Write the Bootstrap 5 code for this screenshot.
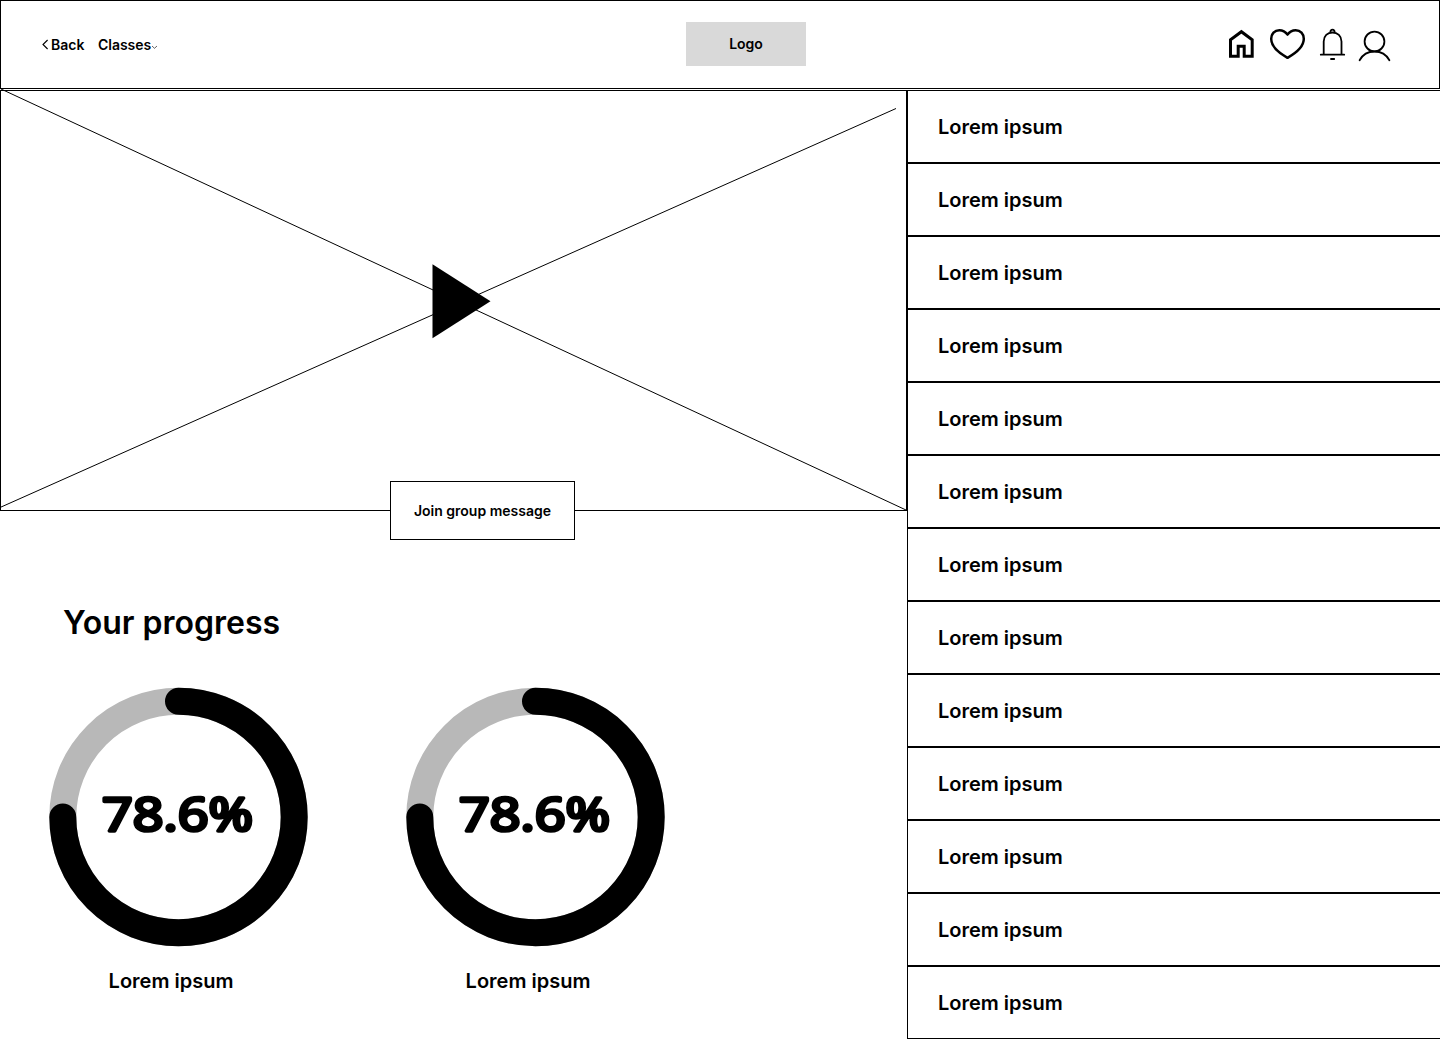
<!DOCTYPE html>
<html lang="en">
<head>
<meta charset="utf-8">
<meta name="viewport" content="width=device-width, initial-scale=1">
<title>Class</title>
<link href="https://cdn.jsdelivr.net/npm/bootstrap@5.3.0/dist/css/bootstrap.min.css" rel="stylesheet">
<style>
  body { font-family: Inter, "Liberation Sans", sans-serif; font-weight: 600; font-size: 14px; line-height: 17px; color: #000; background: #fff; overflow: hidden; }
  svg { display: block; flex: none; overflow: visible; }
  .topbar { height: 89px; border: 1px solid #000; padding: 0 48px 0 41px; margin-bottom: 1px; }
  .back-nav { width: 644px; gap: 13.500px; }
  .topbar a { color: #000; text-decoration: none; }
  .brand-box { width: 120px; height: 44px; background: #d9d9d9; margin-bottom: 1px; padding-bottom: 1px; }
  .main-col { width: 907px; flex: none; }
  .video-box { height: 421px; border: 1px solid #000; position: relative; }
  .video-box svg { margin: -1px; }
  .join-btn { position: absolute; left: 389px; bottom: -30px; width: 185px; height: 59px; color: #000; background: #fff; border: 1px solid #000; border-radius: 0; font-size: 14px; font-weight: 600; line-height: 17px; padding: 0; }
  .progress-area { padding: 92px 49px 0 49px; }
  .progress-area h2 { font-size: 32px; line-height: 40px; font-weight: 600; margin: 0 0 44px 14px; }
  .rings { gap: 98px; }
  .ring-item { width: 259px; }
  .ring-caption, .lesson { font-size: 20px; line-height: 24px; }
  .ring-caption { margin: 22px 15px 0 0; }
  .pct { font-family: "Open Sans", "Noto Sans", sans-serif; font-weight: 400; font-size: 46px; }
  .lesson { height: 73px; border: solid #000; border-width: 1px 0 1px 1px; padding: 0 30px; }
</style>
</head>
<body>
<header class="topbar d-flex align-items-center">
  <nav class="back-nav d-flex align-items-center">
    <a href="#" class="d-flex align-items-center">
      <svg width="9" height="12" viewBox="0 0 9 12" fill="none" stroke="#000" stroke-width="1.1"><path d="M5.600 1 1 5.500l4.600 4.500"/></svg>
      <span>Back</span>
    </a>
    <a href="#" class="d-flex align-items-center">
      <span>Classes</span>
      <svg width="6" height="6" viewBox="0 0 6 6" fill="none" stroke="#222" stroke-width=".7"><path d="M1 4 3.500 6.300 6 4"/></svg>
    </a>
  </nav>
  <div class="brand-box d-flex align-items-center justify-content-center">Logo</div>
  <div class="ms-auto">
    <svg width="165" height="36" viewBox="1226 27 165 36" fill="none" stroke="#000" role="img" aria-label="Home, favourites, notifications, profile">
      <path stroke-width="3" d="M1230.500 56.200V39.700L1241.400 31.700 1252.200 39.700V56.200H1244.200V46.300H1238.200V56.200Z"/>
      <path stroke-width="2.500" stroke-linejoin="round" d="M1287.500 34.600C1285.500 31.800 1282.500 30.200 1279.300 30.200C1274.600 30.200 1271.200 34 1271.200 38.800C1271.200 46 1278.500 52.800 1287.500 57.800C1296.500 52.800 1303.800 46 1303.800 38.800C1303.800 34 1300.400 30.200 1295.700 30.200C1292.500 30.200 1289.500 31.800 1287.500 34.600Z"/>
      <path stroke-width="1.800" stroke-linecap="round" d="M1320.800 54.700H1344.200M1323.700 54.500V41.500C1323.700 36 1327.500 32.500 1332.500 32.500S1341.500 36 1341.500 41.500V54.500M1330.300 32.300C1330.500 28.600 1334.500 28.600 1334.700 32.300M1331 59H1334.200"/>
      <g stroke-width="1.800" stroke-linecap="round"><circle cx="1374.500" cy="41.500" r="9.900"/><path d="M1359.600 60.200C1362.500 55 1368 51.500 1374.500 51.500S1386.500 55 1389.400 60.200"/></g>
    </svg>
  </div>
</header>

<div class="d-flex">
  <main class="main-col">
    <section class="video-box">
      <svg width="907" height="421" viewBox="0 0 907 421" fill="none" stroke="#000">
        <path d="M1-1 906 420M0 417.500 896 18.500"/>
        <path fill="#000" stroke="none" d="M432.500 174.300 490.500 211.300 432.500 248.300Z"/>
      </svg>
      <button type="button" class="btn join-btn">Join group message</button>
    </section>
    <section class="progress-area">
      <h2>Your progress</h2>
      <div class="rings d-flex">
        <div class="ring-item text-center">
          <svg width="259" height="260" viewBox="0 0 259 260" fill="none" stroke-width="27">
            <circle cx="129.500" cy="130" r="115.700" stroke="#b8b8b8"/>
            <path stroke="#000" stroke-linecap="round" d="M129.500 14.300A115.700 115.700 0 1 1 13.800 130"/>
            <text class="pct" x="53" y="144" textLength="151" lengthAdjust="spacingAndGlyphs" fill="#000" stroke="#000" stroke-width="3.600" stroke-linejoin="round">78.6%</text>
          </svg>
          <div class="ring-caption">Lorem ipsum</div>
        </div>
        <div class="ring-item text-center">
          <svg width="259" height="260" viewBox="0 0 259 260" fill="none" stroke-width="27">
            <circle cx="129.500" cy="130" r="115.700" stroke="#b8b8b8"/>
            <path stroke="#000" stroke-linecap="round" d="M129.500 14.300A115.700 115.700 0 1 1 13.800 130"/>
            <text class="pct" x="53" y="144" textLength="151" lengthAdjust="spacingAndGlyphs" fill="#000" stroke="#000" stroke-width="3.600" stroke-linejoin="round">78.6%</text>
          </svg>
          <div class="ring-caption">Lorem ipsum</div>
        </div>
      </div>
    </section>
  </main>
  <aside class="d-flex flex-column flex-grow-1">
    <div class="lesson d-flex align-items-center">Lorem ipsum</div>
    <div class="lesson d-flex align-items-center">Lorem ipsum</div>
    <div class="lesson d-flex align-items-center">Lorem ipsum</div>
    <div class="lesson d-flex align-items-center">Lorem ipsum</div>
    <div class="lesson d-flex align-items-center">Lorem ipsum</div>
    <div class="lesson d-flex align-items-center">Lorem ipsum</div>
    <div class="lesson d-flex align-items-center">Lorem ipsum</div>
    <div class="lesson d-flex align-items-center">Lorem ipsum</div>
    <div class="lesson d-flex align-items-center">Lorem ipsum</div>
    <div class="lesson d-flex align-items-center">Lorem ipsum</div>
    <div class="lesson d-flex align-items-center">Lorem ipsum</div>
    <div class="lesson d-flex align-items-center">Lorem ipsum</div>
    <div class="lesson d-flex align-items-center">Lorem ipsum</div>
  </aside>
</div>
<script src="https://cdn.jsdelivr.net/npm/bootstrap@5.3.0/dist/js/bootstrap.bundle.min.js"></script>
</body>
</html>
